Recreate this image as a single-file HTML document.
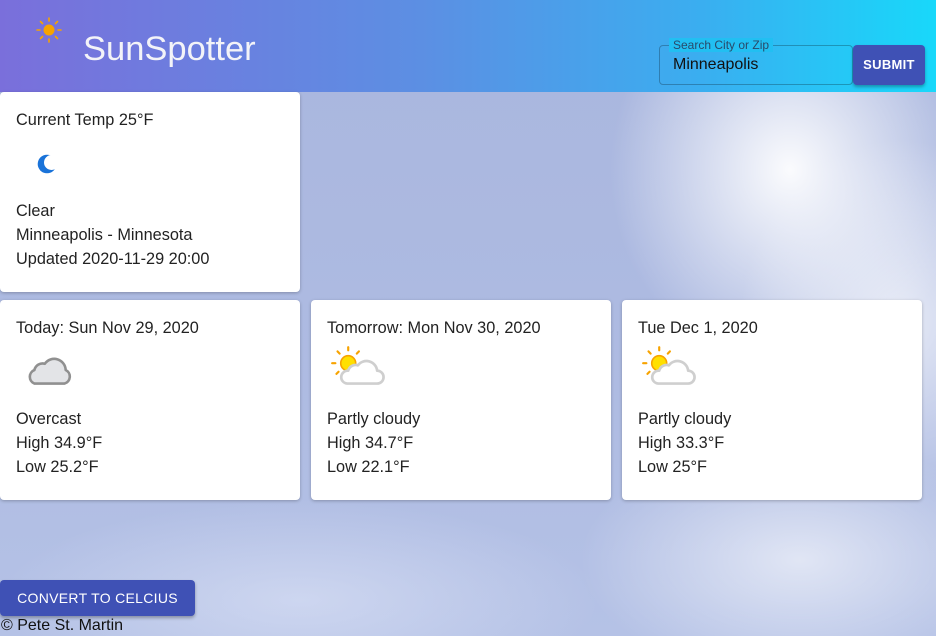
<!DOCTYPE html>
<html><head><meta charset="utf-8"><style>
*{box-sizing:border-box;margin:0;padding:0}
body{width:936px;height:636px;overflow:hidden;position:relative;font-family:"Liberation Sans",Arial,sans-serif;color:#222;
background:radial-gradient(ellipse 180px 200px at 790px 170px,rgba(255,255,255,.95),rgba(255,255,255,0) 100%),
radial-gradient(ellipse 160px 180px at 900px 320px,rgba(255,255,255,.7),rgba(255,255,255,0) 100%),
radial-gradient(ellipse 220px 120px at 800px 560px,rgba(255,255,255,.6),rgba(255,255,255,0) 100%),
radial-gradient(ellipse 300px 100px at 300px 600px,rgba(230,235,250,.5),rgba(255,255,255,0) 100%),
linear-gradient(180deg,#a9b6de 0%,#aebbe2 60%,#b5c2e6 100%);}
.hdr{position:absolute;left:0;top:0;width:936px;height:92px;background:linear-gradient(90deg,#7a6fdb 0%,#5c8fe3 45%,#3aaef0 75%,#18d8fa 100%)}
.title{position:absolute;left:83px;top:30px;font-size:34.5px;color:#f3f3f8}
.sun{position:absolute;left:36px;top:17px}
.field{position:absolute;left:659px;top:45px;width:194px;height:40px;border:1px solid rgba(0,0,0,.25);border-radius:4px}
.field .lbl{position:absolute;left:9px;top:-8px;font-size:12px;color:#2a4a6a;background:#22bff2;padding:0 4px;line-height:14px}
.field .val{position:absolute;left:13px;top:10px;font-size:16px;color:#111}
.sub{position:absolute;left:853px;top:45px;width:72px;height:40px;background:#3f51b5;color:#fff;border-radius:4px;font-size:13px;font-weight:bold;text-align:center;line-height:40px;box-shadow:0 2px 3px rgba(0,0,0,.3);letter-spacing:.3px}
.card{position:absolute;background:#fff;border-radius:4px;box-shadow:0 1px 3px rgba(0,0,0,.25);font-size:16.3px;line-height:24px;padding:16px 16px}
.card p{height:24px}
.ic{height:67px;position:relative}
.btn{position:absolute;left:0;top:580px;width:195px;height:36px;background:#3f51b5;color:#fff;border-radius:4px;font-size:14px;text-align:center;line-height:36px;box-shadow:0 2px 3px rgba(0,0,0,.3);letter-spacing:.3px}
.foot{position:absolute;left:1px;top:617px;font-size:16px;color:#111}
</style></head><body>
<div class="hdr">
<svg class="sun" width="26" height="26" viewBox="0 0 26 26"><circle cx="13" cy="13" r="5.5" fill="#f7a300"/><g stroke="#f7a300" stroke-width="1.6" stroke-linecap="round"><line x1="13" y1="1" x2="13" y2="4"/><line x1="13" y1="22" x2="13" y2="25"/><line x1="1" y1="13" x2="4" y2="13"/><line x1="22" y1="13" x2="25" y2="13"/><line x1="4.5" y1="4.5" x2="6.5" y2="6.5"/><line x1="19.5" y1="19.5" x2="21.5" y2="21.5"/><line x1="4.5" y1="21.5" x2="6.5" y2="19.5"/><line x1="19.5" y1="6.5" x2="21.5" y2="4.5"/></g></svg>
<div class="title">SunSpotter</div>
<div class="field"><span class="lbl">Search City or Zip</span><span class="val">Minneapolis</span></div>
<div class="sub">SUBMIT</div>
</div>
<div class="card" style="left:0;top:92px;width:300px;height:200px">
<p>Current Temp 25°F</p>
<div class="ic"><svg style="position:absolute;left:21px;top:21px" width="18" height="22" viewBox="0 0 18 22"><defs><mask id="mm"><rect width="18" height="22" fill="#fff"/><circle cx="14.5" cy="9.5" r="7.5" fill="#000"/></mask></defs><circle cx="10" cy="11" r="9.3" fill="#1a73d9" mask="url(#mm)"/></svg></div>
<p>Clear</p><p>Minneapolis - Minnesota</p><p>Updated 2020-11-29 20:00</p>
</div>
<div class="card" style="left:0;top:300px;width:300px;height:200px">
<p>Today: Sun Nov 29, 2020</p>
<div class="ic"><svg style="position:absolute;left:8px;top:12px" width="50" height="36" viewBox="0 0 48 34"><path d="M10 30 A7 7 0 0 1 10 17 A8 8 0 0 1 20 11 A11 11 0 0 1 40 17 A7 7 0 0 1 39 30 Z" fill="#e3e4e7" stroke="#909090" stroke-width="2.5" stroke-linejoin="round"/></svg></div>
<p>Overcast</p><p>High 34.9°F</p><p>Low 25.2°F</p>
</div>
<div class="card" style="left:311px;top:300px;width:300px;height:200px">
<p>Tomorrow: Mon Nov 30, 2020</p>
<div class="ic"><svg style="position:absolute;left:3px;top:5px" width="60" height="45" viewBox="0 0 56 42"><g stroke="#f7a300" stroke-width="2" stroke-linecap="round"><line x1="17" y1="2" x2="17" y2="5"/><line x1="7" y1="6" x2="9" y2="8"/><line x1="27" y1="6" x2="25" y2="8"/><line x1="2" y1="17" x2="5" y2="17"/><line x1="6" y1="27" x2="8" y2="25"/></g><circle cx="17" cy="17" r="7" fill="#ffe000" stroke="#f7a300" stroke-width="1.5"/><path d="M16 36 A6 6 0 0 1 17 24 A7 7 0 0 1 26 19 A10 10 0 0 1 44 24 A6 6 0 0 1 44 36 Z" fill="#fff" stroke="#cfcfcf" stroke-width="2.5" stroke-linejoin="round"/></svg></div>
<p>Partly cloudy</p><p>High 34.7°F</p><p>Low 22.1°F</p>
</div>
<div class="card" style="left:622px;top:300px;width:300px;height:200px">
<p>Tue Dec 1, 2020</p>
<div class="ic"><svg style="position:absolute;left:3px;top:5px" width="60" height="45" viewBox="0 0 56 42"><g stroke="#f7a300" stroke-width="2" stroke-linecap="round"><line x1="17" y1="2" x2="17" y2="5"/><line x1="7" y1="6" x2="9" y2="8"/><line x1="27" y1="6" x2="25" y2="8"/><line x1="2" y1="17" x2="5" y2="17"/><line x1="6" y1="27" x2="8" y2="25"/></g><circle cx="17" cy="17" r="7" fill="#ffe000" stroke="#f7a300" stroke-width="1.5"/><path d="M16 36 A6 6 0 0 1 17 24 A7 7 0 0 1 26 19 A10 10 0 0 1 44 24 A6 6 0 0 1 44 36 Z" fill="#fff" stroke="#cfcfcf" stroke-width="2.5" stroke-linejoin="round"/></svg></div>
<p>Partly cloudy</p><p>High 33.3°F</p><p>Low 25°F</p>
</div>
<div class="btn">CONVERT TO CELCIUS</div>
<div class="foot">© Pete St. Martin</div>
</body></html>
